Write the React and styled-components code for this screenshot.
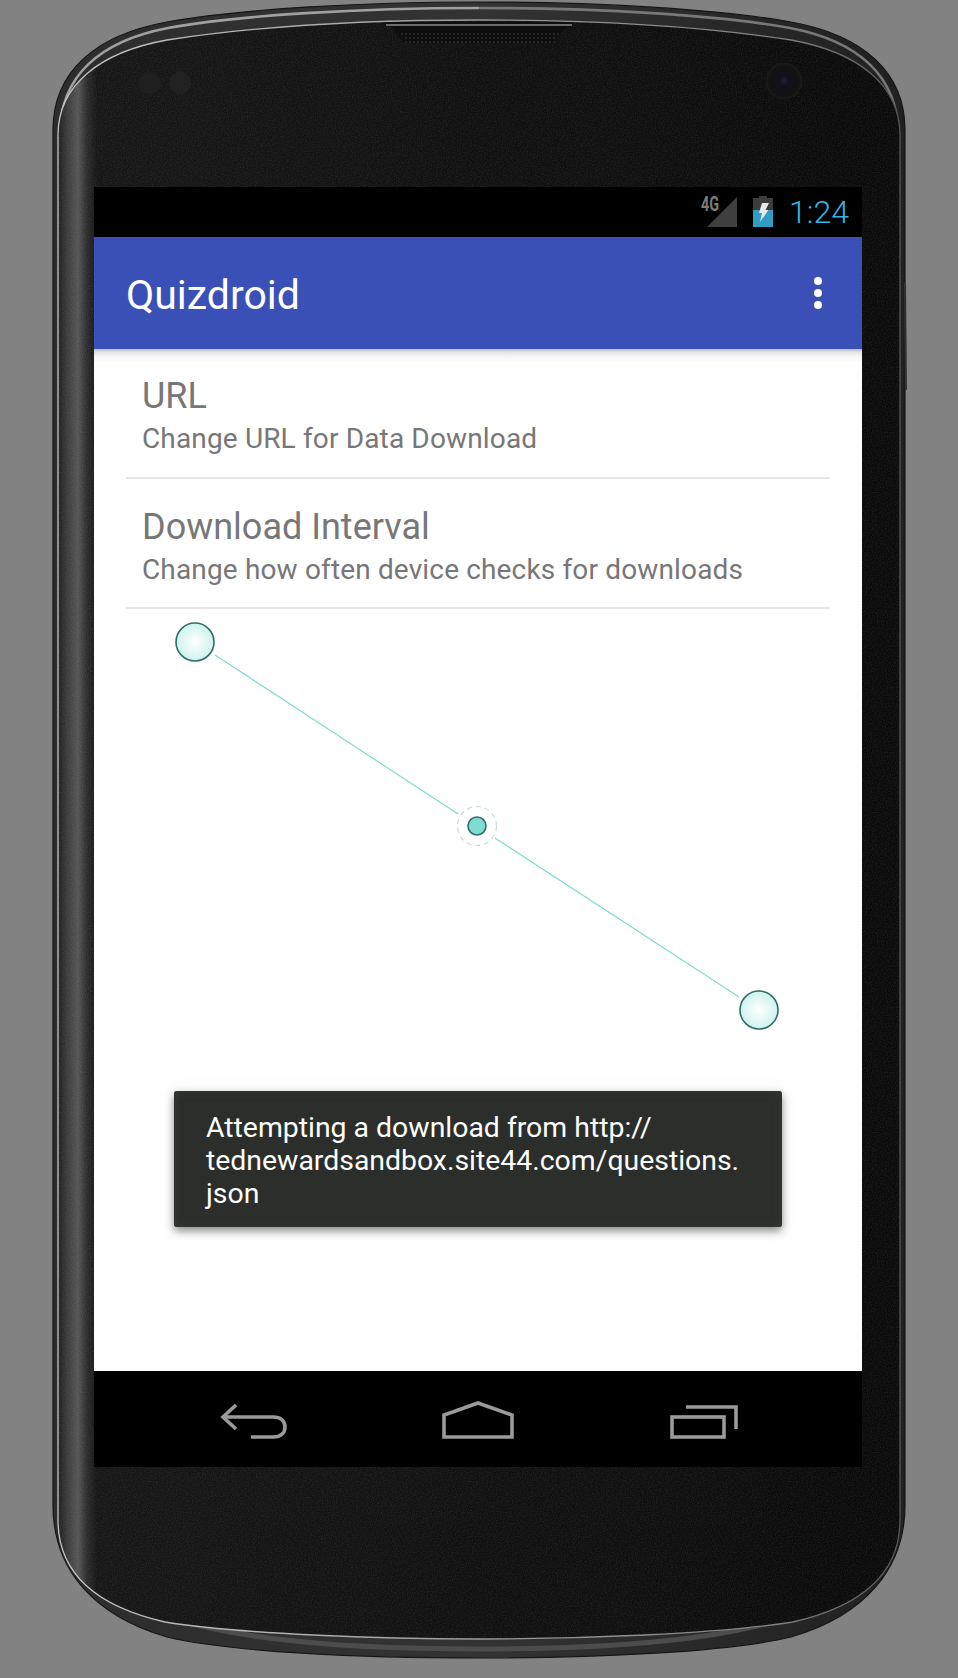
import React from "react";
import styled, { createGlobalStyle } from "styled-components";

const Global = createGlobalStyle`
  html, body { margin: 0; padding: 0; background: #828282; }
  * { box-sizing: border-box; }
`;

const Stage = styled.div`
  position: relative;
  width: 958px;
  height: 1678px;
  padding: 187px 96px 211px 94px;
  background: #828282;
  overflow: hidden;
  font-family: Roboto, "Liberation Sans", sans-serif;
`;

const FrameArt = styled.svg`
  position: absolute;
  left: 0;
  top: 0;
  width: 958px;
  height: 1678px;
`;

const Screen = styled.div`
  position: relative;
  display: flex;
  flex-direction: column;
  width: 768px;
  height: 1280px;
  background: #000;
`;

const StatusBar = styled.div`
  display: flex;
  align-items: flex-start;
  justify-content: flex-end;
  height: 50px;
  padding-right: 13px;
  background: #000;
`;

const StatusIcon = styled.svg`
  display: block;
  margin-top: 8px;
  margin-right: ${(p) => p.$gap}px;
  overflow: visible;
`;

const Clock = styled.span`
  font-size: 32px;
  font-weight: 300;
  line-height: 50px;
  color: #33b5e5;
`;

const AppBar = styled.div`
  position: relative;
  z-index: 1;
  display: flex;
  align-items: center;
  justify-content: space-between;
  height: 112px;
  padding: 0 40px 0 32px;
  background: #3a50b6;
`;

const Title = styled.div`
  font-size: 41px;
  font-weight: 400;
  color: #fff;
  line-height: 112px;
  margin-top: 4px;
`;

const Overflow = styled.div`
  display: flex;
  flex-direction: column;
  gap: 4px;
  margin-top: -1px;
`;

const Dot = styled.span`
  display: block;
  width: 8px;
  height: 8px;
  border-radius: 50%;
  background: #fff;
`;

const Content = styled.div`
  position: relative;
  flex: 1;
  display: flex;
  flex-direction: column;
  background: #fff;
`;

const BarShadow = styled.div`
  position: absolute;
  top: 0;
  left: 0;
  right: 0;
  height: 13px;
  background: linear-gradient(#b9b9c4 0, #e6e6ea 25%, #f6f6f8 60%, #fdfdfd 100%);
`;

const Settings = styled.div`
  position: relative;
  padding: 0 32px;
`;

const Item = styled.div`
  height: 130px;
  padding: ${(p) => p.$top}px 0 0 16px;
  border-bottom: 2px solid #e6e6e6;
`;

const ItemTitle = styled.div`
  font-size: 36px;
  line-height: 44px;
  color: #777;
`;

const ItemSub = styled.div`
  font-size: 28px;
  line-height: 42px;
  letter-spacing: 0.15px;
  color: #777;
`;

const Curve = styled.svg`
  display: block;
`;

const Toast = styled.div`
  position: absolute;
  left: 80px;
  top: 742px;
  width: 608px;
  height: 136px;
  padding: 20px 32px 0;
  font-size: 28.4px;
  line-height: 33px;
  color: #fff;
  background: #2b2e2b;
  border-radius: 3px;
  box-shadow: inset 0 0 10px #363836, 0 4px 9px rgba(0, 0, 0, 0.45), 0 0 14px 8px rgba(230, 235, 230, 0.22);
`;

const NavBar = styled.div`
  height: 96px;
  background: #000;
`;

const NavArt = styled.svg`
  display: block;
`;

const Handle = ({ cx, cy }) => (
  <circle cx={cx} cy={cy} r="19" fill="url(#handleFill)" stroke="#2f6f6a" strokeWidth="1.6" />
);

const top =
  "M479,2 C360,2 240,9 167,22 C95,35 53,72 53,130 L53,1505 C53,1568 92,1615 167,1637 C230,1652 360,1658 479,1658 C598,1658 728,1652 791,1637 C866,1615 905,1568 905,1505 L905,130 C905,72 863,35 791,22 C718,9 598,2 479,2 Z";
const inner =
  "M479,20 C380,20 270,24 167,40 C100,52 58,85 58,135 L58,1520 C58,1572 95,1606 165,1622 C240,1634 380,1639 479,1639 C578,1639 718,1634 793,1622 C863,1606 900,1572 900,1520 L900,135 C900,85 858,52 791,40 C688,24 578,20 479,20 Z";

export default function App() {
  return (
    <Stage>
      <Global />
      <FrameArt viewBox="0 0 958 1678">
        <defs>
          <linearGradient id="bezel" gradientUnits="userSpaceOnUse" x1="58" y1="0" x2="900" y2="0">
            <stop offset="0" stopColor="#1e1e1e" />
            <stop offset="0.012" stopColor="#3e3e3e" />
            <stop offset="0.024" stopColor="#555" />
            <stop offset="0.034" stopColor="#2c2c2c" />
            <stop offset="0.046" stopColor="#161616" />
            <stop offset="0.5" stopColor="#101010" />
            <stop offset="1" stopColor="#0a0a0a" />
          </linearGradient>
          <linearGradient id="rim" gradientUnits="userSpaceOnUse" x1="0" y1="0" x2="958" y2="0">
            <stop offset="0" stopColor="#2c2c2c" />
            <stop offset="0.5" stopColor="#333" />
            <stop offset="1" stopColor="#1e1e1e" />
          </linearGradient>
          <linearGradient id="glint" gradientUnits="userSpaceOnUse" x1="58" y1="0" x2="900" y2="0">
            <stop offset="0" stopColor="#c4c4c4" />
            <stop offset="0.5" stopColor="#9a9a9a" />
            <stop offset="0.85" stopColor="#808080" />
            <stop offset="1" stopColor="#555" />
          </linearGradient>
          <filter id="grain" x="0" y="0" width="100%" height="100%">
            <feTurbulence type="fractalNoise" baseFrequency="0.8" numOctaves="2" seed="3" />
            <feColorMatrix values="0 0 0 0 1  0 0 0 0 1  0 0 0 0 1  0.5 0 0 0 -0.17" />
          </filter>
          <clipPath id="innerClip">
            <path d={inner} />
          </clipPath>
          <pattern id="mesh" width="4" height="4" patternUnits="userSpaceOnUse">
            <rect x="1" y="1" width="2" height="2" fill="#262626" />
          </pattern>
          <radialGradient id="lens">
            <stop offset="0" stopColor="#1c1c44" />
            <stop offset="0.28" stopColor="#101018" />
            <stop offset="0.85" stopColor="#121212" />
            <stop offset="1" stopColor="#1b1b1b" />
          </radialGradient>
        </defs>
        <path d={top} fill="url(#rim)" stroke="#161616" strokeWidth="1.2" />
        <path
          d="M479,8 C360,8 240,15 168,28 C100,41 60,76 60,134"
          fill="none"
          stroke="#a0a0a0"
          strokeWidth="2.6"
        />
        <path
          d="M479,8 C598,8 718,15 790,28 C858,41 898,76 898,134"
          fill="none"
          stroke="#787878"
          strokeWidth="2.6"
        />
        <path
          d="M110,1592 C190,1640 340,1649 479,1649 C618,1649 768,1640 848,1592"
          fill="none"
          stroke="#4c4c4c"
          strokeWidth="5"
        />
        <path d={inner} fill="url(#bezel)" stroke="url(#glint)" strokeWidth="1.3" />
        <rect x="58" y="20" width="842" height="1620" filter="url(#grain)" clipPath="url(#innerClip)" opacity="0.3" />
        <path d="M382,22 C392,24 394,31 404,43 L554,43 C564,31 566,24 576,22 Z" fill="#0e0e0e" />
        <path d="M398,33 L562,33 L554,43 L406,43 Z" fill="url(#mesh)" />
        <path d="M386,25 L572,25" stroke="#6a6a6a" strokeWidth="2" />
        <circle cx="150" cy="83" r="11" fill="#1f1f1f" />
        <circle cx="180" cy="83" r="11" fill="#212121" />
        <circle cx="784" cy="81" r="18" fill="url(#lens)" />
        <path d="M905,283 L906,390" stroke="#333" strokeWidth="2" />
      </FrameArt>
      <Screen>
        <StatusBar>
          <StatusIcon width="40" height="32" viewBox="0 0 40 32" $gap={14}>
            <path d="M8,32 L38,32 L38,2 Z" fill="#3f3f3f" />
            <text
              x="2"
              y="16"
              fontFamily="Roboto, sans-serif"
              fontSize="20"
              fontWeight="700"
              fill="#7c7c7c"
              textLength="18"
              lengthAdjust="spacingAndGlyphs"
            >
              4G
            </text>
          </StatusIcon>
          <StatusIcon width="20" height="32" viewBox="0 0 20 32" $gap={16}>
            <path d="M6,1 H14 V3 H20 V15 H0 V3 H6 Z" fill="#3c3c3c" />
            <rect x="0" y="15" width="20" height="17" fill="#2f9cc4" />
            <path d="M9,8 L16,8 L12.5,15 L15.5,15 L7,27 L9,18 L6,18 Z" fill="#e8e8e8" />
          </StatusIcon>
          <Clock>1:24</Clock>
        </StatusBar>
        <AppBar>
          <Title>Quizdroid</Title>
          <Overflow>
            <Dot />
            <Dot />
            <Dot />
          </Overflow>
        </AppBar>
        <Content>
          <BarShadow />
          <Settings>
            <Item $top={25}>
              <ItemTitle>URL</ItemTitle>
              <ItemSub>Change URL for Data Download</ItemSub>
            </Item>
            <Item $top={26}>
              <ItemTitle>Download Interval</ItemTitle>
              <ItemSub>Change how often device checks for downloads</ItemSub>
            </Item>
          </Settings>
          <Curve width="768" height="430" viewBox="94 609 768 430">
            <defs>
              <radialGradient id="handleFill">
                <stop offset="0" stopColor="#ffffff" />
                <stop offset="1" stopColor="#cdf3ed" />
              </radialGradient>
            </defs>
            <path d="M215,655 L458,814 M495,838 L739,997" stroke="#7fdccf" strokeWidth="1.2" fill="none" />
            <circle cx="477" cy="826" r="19.5" fill="none" stroke="#c9dedb" strokeWidth="1.2" strokeDasharray="5 4" />
            <circle cx="477" cy="826" r="9" fill="#7fdccf" stroke="#2f6f6a" strokeWidth="1.6" />
            <Handle cx={195} cy={642} />
            <Handle cx={759} cy={1010} />
          </Curve>
          <Toast>
            Attempting a download from http://
            <br />
            tednewardsandbox.site44.com/questions.
            <br />
            json
          </Toast>
        </Content>
        <NavBar>
          <NavArt width="768" height="96" viewBox="94 1371 768 96">
            <g fill="none" stroke="#9a9a9a" strokeWidth="3.6">
              <path d="M236,1405 L223,1417 L236,1429" />
              <path d="M223,1417 H273 C281,1417 285,1421 285,1427 C285,1433 281,1437 273,1437 H251" />
              <path d="M444,1437 V1415 L478,1403 L512,1415 V1437 Z" />
              <rect x="672" y="1417" width="52" height="20" />
              <path d="M686,1407 H736 V1429" />
            </g>
          </NavArt>
        </NavBar>
      </Screen>
    </Stage>
  );
}
